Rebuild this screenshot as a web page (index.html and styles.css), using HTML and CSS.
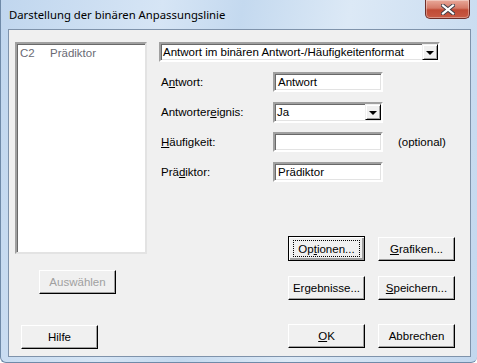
FILE: index.html
```html
<!DOCTYPE html>
<html lang="de">
<head>
    <meta charset="UTF-8">
    <title>Darstellung der binären Anpassungslinie</title>
    <link rel="stylesheet" href="styles.css">
</head>
<body>
    <div class="window">
        <div class="titlebar">
            <span class="title">Darstellung der binären Anpassungslinie</span>
            <div class="close">
                <svg width="14" height="11" viewBox="0 0 14 11">
                    <path d="M2 1.5 L12 9.5 M12 1.5 L2 9.5" stroke="#3c3c46" stroke-width="4" stroke-linecap="square"/>
                    <path d="M2 1.5 L12 9.5 M12 1.5 L2 9.5" stroke="#ffffff" stroke-width="2.2" stroke-linecap="square"/>
                </svg>
            </div>
        </div>

        <div class="client">
            <div class="left">
                <div class="listbox">
                    <div class="item"><span class="col-id">C2</span><span>Prädiktor</span></div>
                </div>
                <div class="btn btn-select disabled">Auswählen</div>
                <div class="btn btn-help">Hilfe</div>
            </div>

            <div class="right">
                <div class="combo combo-format">
                    <span class="combo-text">Antwort im binären Antwort-/Häufigkeitenformat</span>
                    <span class="drop"><span class="arrow"></span></span>
                </div>

                <div class="fields">
                    <div class="row">
                        <label class="label">A<u>n</u>twort:</label>
                        <div class="textbox">Antwort</div>
                    </div>
                    <div class="row">
                        <label class="label">Antworter<u>e</u>ignis:</label>
                        <div class="combo combo-small">
                            <span class="combo-text">Ja</span>
                            <span class="drop"><span class="arrow"></span></span>
                        </div>
                    </div>
                    <div class="row">
                        <label class="label"><u>H</u>äufigkeit:</label>
                        <div class="textbox"></div>
                        <span class="hint">(optional)</span>
                    </div>
                    <div class="row">
                        <label class="label">Prä<u>d</u>iktor:</label>
                        <div class="textbox">Prädiktor</div>
                    </div>
                </div>

                <div class="actions">
                    <div class="btn focused"><span class="focus-ring">Op<u>t</u>ionen...</span></div>
                    <div class="btn"><u>G</u>rafiken...</div>
                    <div class="btn">Er<u>g</u>ebnisse...</div>
                    <div class="btn"><u>S</u>peichern...</div>
                    <div class="btn btn-ok"><u>O</u>K</div>
                    <div class="btn btn-ok">Abbrechen</div>
                </div>
            </div>
        </div>
    </div>
</body>
</html>
```

FILE: styles.css
```css
html, body {
    margin: 0;
    padding: 0;
}

body {
    width: 477px;
    height: 363px;
    overflow: hidden;
    font-family: "Liberation Sans", Arial, sans-serif;
    font-size: 11.5px;
    color: #000;
}

.window {
    box-sizing: border-box;
    width: 477px;
    height: 363px;
    padding: 0 6px 6px 7px;
    border-left: 1px solid #6f8aa8;
    border-bottom: 1px solid #6f8aa8;
    border-radius: 0 0 6px 6px;
    background: linear-gradient(100deg, #c0d6ee 0%, #d6e5f5 30%, #c4d9ef 45%, #dce9f6 65%, #c2d7ee 100%);
}

/* Title bar */
.titlebar {
    height: 29px;
    display: flex;
    align-items: flex-start;
}

.title {
    font-family: "Noto Sans", "Open Sans", sans-serif;
    font-size: 11.3px;
    line-height: 29px;
    padding-left: 1px;
    color: #000;
}

.close {
    margin-left: auto;
    margin-right: 1px;
    width: 45px;
    height: 19px;
    box-sizing: border-box;
    border: 1px solid #6e2e29;
    border-top: none;
    border-radius: 0 0 5px 5px;
    background: linear-gradient(#e9a99a 0%, #d57a68 45%, #c04a35 55%, #c85a44 100%);
    box-shadow: inset 0 0 0 1px rgba(255, 255, 255, 0.35);
    display: flex;
    align-items: center;
    justify-content: center;
}

/* Client area */
.client {
    box-sizing: border-box;
    height: 328px;
    border: 1px solid #7f93ab;
    background: #f0f0f0;
    display: flex;
}

.left {
    width: 132px;
    padding: 12px 0 0 6px;
    display: flex;
    flex-direction: column;
    align-items: flex-start;
}

.listbox {
    box-sizing: border-box;
    width: 132px;
    height: 212px;
    background: #fff;
    border: 2px solid;
    border-color: #a0a0a0 #e3e3e3 #e3e3e3 #a0a0a0;
    box-shadow: inset 1px 1px 0 #696969;
    padding: 2px 3px;
}

.item {
    display: flex;
    color: #6a6a74;
    line-height: 14px;
}

.col-id {
    width: 30px;
}

/* Buttons */
.btn {
    box-sizing: border-box;
    width: 77px;
    height: 24px;
    background: #f0f0f0;
    border: 1px solid;
    border-color: #fff #000 #000 #fff;
    box-shadow: inset -1px -1px 0 #a0a0a0;
    display: flex;
    align-items: center;
    justify-content: center;
    color: #000;
}

.btn.disabled {
    color: #a0a0a0;
}

.btn-select {
    margin: 16px 0 0 24px;
}

.btn-help {
    margin: 31px 0 0 6px;
}

.btn.focused {
    border: 1px solid #000;
    box-shadow: inset 1px 1px 0 #fff, inset -2px -2px 0 #a0a0a0;
    height: 25px;
    margin-top: -1px;
}

.focus-ring {
    box-sizing: border-box;
    width: 67px;
    height: 17px;
    border: 1px dotted #000;
    display: flex;
    align-items: center;
    justify-content: center;
}

/* Right side */
.right {
    padding: 12px 0 0 12px;
    display: flex;
    flex-direction: column;
}

.combo {
    box-sizing: border-box;
    height: 20px;
    background: #fff;
    border: 2px solid;
    border-color: #a0a0a0 #fff #fff #a0a0a0;
    box-shadow: inset 1px 1px 0 #696969, inset -1px -1px 0 #e3e3e3;
    display: flex;
    align-items: center;
}

.combo-format {
    width: 281px;
}

.combo-small {
    width: 110px;
    height: 21px;
}

.combo-text {
    flex: 1;
    padding-left: 2px;
    white-space: nowrap;
}

.drop {
    box-sizing: border-box;
    width: 16px;
    height: 16px;
    background: #f0f0f0;
    border: 1px solid;
    border-color: #f0f0f0 #000 #000 #f0f0f0;
    box-shadow: inset 1px 1px 0 #fff, inset -1px -1px 0 #a0a0a0;
    display: flex;
    align-items: center;
    justify-content: center;
}

.arrow {
    width: 0;
    height: 0;
    border-left: 4px solid transparent;
    border-right: 4px solid transparent;
    border-top: 4px solid #000;
    margin-top: 1px;
}

.fields {
    padding-left: 2px;
}

.row {
    display: flex;
    align-items: center;
    margin-top: 10px;
    height: 20px;
}

.label {
    width: 112px;
}

.textbox {
    box-sizing: border-box;
    width: 110px;
    height: 20px;
    background: #fff;
    border: 2px solid;
    border-color: #a0a0a0 #fff #fff #a0a0a0;
    box-shadow: inset 1px 1px 0 #696969, inset -1px -1px 0 #e3e3e3;
    padding-left: 3px;
    display: flex;
    align-items: center;
}

.hint {
    margin-left: 15px;
}

.actions {
    margin: 55px 0 0 129px;
    display: grid;
    grid-template-columns: 77px 77px;
    column-gap: 13px;
    row-gap: 15px;
}

.btn-ok {
    margin-top: 9px;
}
```
